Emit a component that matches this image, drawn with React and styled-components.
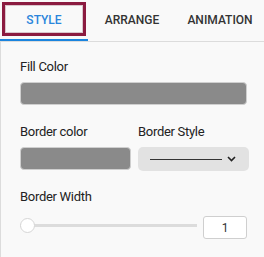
import React from "react";
import styled, { createGlobalStyle } from "styled-components";

const Global = createGlobalStyle`
  html, body { margin: 0; padding: 0; background: #f9f9f9; }
  body { font-family: Roboto, "Noto Sans", sans-serif; color: #222; }
`;

const Panel = styled.div`
  width: 264px;
  height: 257px;
  background: #f9f9f9;
  display: flex;
  flex-direction: column;
  overflow: hidden;
`;

const TabBar = styled.div`
  display: grid;
  grid-template-columns: repeat(3, 88px);
  height: 41px;
  border-bottom: 1px solid #dcdcdc;
  flex-shrink: 0;
`;

const Tab = styled.div`
  position: relative;
  display: flex;
  align-items: center;
  justify-content: center;
  height: 39px;
  border-bottom: 2px solid ${(p) => (p.$active ? "#1a84de" : "transparent")};
  font-size: 12px;
  font-weight: 500;
  color: ${(p) => (p.$active ? "#2a86dc" : "#333")};
`;

const Highlight = styled.div`
  position: absolute;
  top: 2px;
  left: 2px;
  right: 2px;
  bottom: 3px;
  border: 3px solid #8b1b40;
  box-shadow: inset 0 0 0 1px #d9c6cc;
  pointer-events: none;
`;

const Body = styled.div`
  flex: 1;
  border-left: 1px solid #dcdcdc;
  padding: 16px 17px 0 19px;
  display: flex;
  flex-direction: column;
`;

const Section = styled.div`
  display: flex;
  flex-direction: column;
  gap: 6px;
  margin-bottom: 18px;
`;

const Label = styled.div`
  font-size: 13px;
  line-height: 18px;
  letter-spacing: -0.3px;
  color: #222;
`;

const Swatch = styled.div`
  height: 23px;
  border-radius: 4px;
  background: #8a8a8a;
  border: 1px solid #cfcfcf;
  box-sizing: border-box;
`;

const TwoCol = styled.div`
  display: grid;
  grid-template-columns: 111px 111px;
  column-gap: 7px;
  row-gap: 6px;
  margin-bottom: 17px;
`;

const Select = styled.div`
  height: 24px;
  border-radius: 5px;
  background: #e2e2e2;
  display: flex;
  align-items: center;
  padding: 0 13px 0 12px;
  gap: 5px;
`;

const LineSample = styled.div`
  flex: 1;
  height: 1px;
  background: #333;
`;

const SliderRow = styled.div`
  display: flex;
  align-items: flex-start;
  gap: 6px;
  margin-top: 4px;
`;

const Track = styled.div`
  position: relative;
  flex: 1;
  height: 3px;
  margin-top: 8px;
  background: #dcdcdc;
`;

const Thumb = styled.div`
  position: absolute;
  left: 0;
  top: -6px;
  width: 15px;
  height: 15px;
  box-sizing: border-box;
  border-radius: 50%;
  background: #fff;
  border: 1px solid #d6d6d6;
`;

const NumberBox = styled.div`
  width: 44px;
  height: 23px;
  box-sizing: border-box;
  border: 1px solid #cfcfcf;
  border-radius: 3px;
  background: #fff;
  display: flex;
  align-items: center;
  justify-content: center;
  font-size: 12px;
  color: #333;
`;

const Chevron = () => (
  <svg width="9" height="6" viewBox="0 0 9 6">
    <path d="M1 1 L4.5 4.5 L8 1" fill="none" stroke="#222" strokeWidth="1.6" />
  </svg>
);

export default function App() {
  return (
    <>
      <Global />
      <Panel>
        <TabBar>
          <Tab $active>
            STYLE
            <Highlight />
          </Tab>
          <Tab>ARRANGE</Tab>
          <Tab>ANIMATION</Tab>
        </TabBar>
        <Body>
          <Section>
            <Label>Fill Color</Label>
            <Swatch />
          </Section>
          <TwoCol>
            <Label>Border color</Label>
            <Label>Border Style</Label>
            <Swatch />
            <Select>
              <LineSample />
              <Chevron />
            </Select>
          </TwoCol>
          <Section>
            <Label>Border Width</Label>
            <SliderRow>
              <Track>
                <Thumb />
              </Track>
              <NumberBox>1</NumberBox>
            </SliderRow>
          </Section>
        </Body>
      </Panel>
    </>
  );
}
